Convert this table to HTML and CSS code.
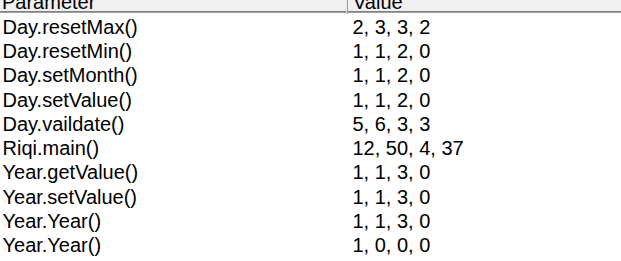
FILE: index.html
```html
<!DOCTYPE html>
<html>
<head>
<meta charset="utf-8">
<link rel="stylesheet" href="styles.css">
</head>
<body>
<div class="table">
  <div class="head">
    <div class="hcell first">Parameter</div>
    <div class="hcell">Value</div>
  </div>
  <div class="rows">
    <div class="row"><div class="c1">Day.resetMax()</div><div class="c2">2, 3, 3, 2</div></div>
    <div class="row"><div class="c1">Day.resetMin()</div><div class="c2">1, 1, 2, 0</div></div>
    <div class="row"><div class="c1">Day.setMonth()</div><div class="c2">1, 1, 2, 0</div></div>
    <div class="row"><div class="c1">Day.setValue()</div><div class="c2">1, 1, 2, 0</div></div>
    <div class="row"><div class="c1">Day.vaildate()</div><div class="c2">5, 6, 3, 3</div></div>
    <div class="row"><div class="c1">Riqi.main()</div><div class="c2">12, 50, 4, 37</div></div>
    <div class="row"><div class="c1">Year.getValue()</div><div class="c2">1, 1, 3, 0</div></div>
    <div class="row"><div class="c1">Year.setValue()</div><div class="c2">1, 1, 3, 0</div></div>
    <div class="row"><div class="c1">Year.Year()</div><div class="c2">1, 1, 3, 0</div></div>
    <div class="row"><div class="c1">Year.Year()</div><div class="c2">1, 0, 0, 0</div></div>
  </div>
</div>
</body>
</html>
```
FILE: styles.css
```css
html, body {
  margin: 0;
  padding: 0;
  background: #ffffff;
  overflow: hidden;
}
.table {
  font-family: "Liberation Sans", Arial, sans-serif;
  font-size: 20px;
  color: #000;
}
.head {
  display: grid;
  grid-template-columns: 348px 1fr;
  margin-top: -10px;
  height: 21px;
  background: #f0f0f0;
  border-bottom: 1px solid #808080;
  box-shadow: 0 1px 0 #a0a0a0;
}
.hcell {
  line-height: 24px;
  padding-left: 5px;
  overflow: visible;
  white-space: nowrap;
  color: #000;
}
.hcell.first {
  padding-left: 2px;
  border-right: 1px solid #a0a0a0;
  box-shadow: inset -1px 0 0 #e3e3e3;
}
.rows {
  padding-top: 3px;
}
.row {
  display: grid;
  grid-template-columns: 348px 1fr;
  height: 24.22px;
  line-height: 24.22px;
  white-space: nowrap;
}
.c1 {
  padding-left: 2.5px;
}
.c2 {
  padding-left: 4.5px;
}
```
